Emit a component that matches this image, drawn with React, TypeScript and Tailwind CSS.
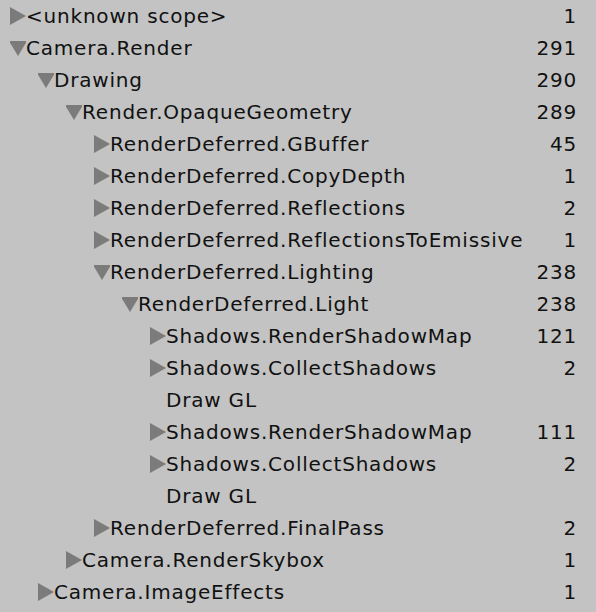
type Row = {
  label: string;
  depth: number;
  arrow?: 'open' | 'closed';
  count?: string;
};

const rows: Row[] = [
  { label: '<unknown scope>', depth: 0, arrow: 'closed', count: '1' },
  { label: 'Camera.Render', depth: 0, arrow: 'open', count: '291' },
  { label: 'Drawing', depth: 1, arrow: 'open', count: '290' },
  { label: 'Render.OpaqueGeometry', depth: 2, arrow: 'open', count: '289' },
  { label: 'RenderDeferred.GBuffer', depth: 3, arrow: 'closed', count: '45' },
  { label: 'RenderDeferred.CopyDepth', depth: 3, arrow: 'closed', count: '1' },
  { label: 'RenderDeferred.Reflections', depth: 3, arrow: 'closed', count: '2' },
  { label: 'RenderDeferred.ReflectionsToEmissive', depth: 3, arrow: 'closed', count: '1' },
  { label: 'RenderDeferred.Lighting', depth: 3, arrow: 'open', count: '238' },
  { label: 'RenderDeferred.Light', depth: 4, arrow: 'open', count: '238' },
  { label: 'Shadows.RenderShadowMap', depth: 5, arrow: 'closed', count: '121' },
  { label: 'Shadows.CollectShadows', depth: 5, arrow: 'closed', count: '2' },
  { label: 'Draw GL', depth: 5 },
  { label: 'Shadows.RenderShadowMap', depth: 5, arrow: 'closed', count: '111' },
  { label: 'Shadows.CollectShadows', depth: 5, arrow: 'closed', count: '2' },
  { label: 'Draw GL', depth: 5 },
  { label: 'RenderDeferred.FinalPass', depth: 3, arrow: 'closed', count: '2' },
  { label: 'Camera.RenderSkybox', depth: 2, arrow: 'closed', count: '1' },
  { label: 'Camera.ImageEffects', depth: 1, arrow: 'closed', count: '1' },
];

const indents = ['pl-[10px]', 'pl-[38px]', 'pl-[66px]', 'pl-[94px]', 'pl-[122px]', 'pl-[150px]'];

function Arrow({ kind }: { kind?: 'open' | 'closed' }) {
  if (!kind) return <span className="w-[16px] shrink-0" />;
  return (
    <svg width="16" height="18" viewBox="0 0 16 18" className="shrink-0">
      {kind === 'closed' ? (
        <polygon points="0,0 16,9 0,18" fill="#7b7b7b" />
      ) : (
        <polygon points="-1,2 17,2 8,17" fill="#7b7b7b" />
      )}
    </svg>
  );
}

export default function App() {
  return (
    <div className="w-[596px] h-[612px] bg-[#c3c3c3] text-[#111] text-[20px] tracking-[0.8px] font-['DejaVu_Sans',sans-serif] overflow-hidden">
      {rows.map((row, i) => (
        <div key={i} className={`flex items-center h-[32px] pr-[19px] ${indents[row.depth]}`}>
          <Arrow kind={row.arrow} />
          <span className="flex-1 whitespace-nowrap">{row.label}</span>
          <span className="whitespace-nowrap">{row.count}</span>
        </div>
      ))}
    </div>
  );
}
